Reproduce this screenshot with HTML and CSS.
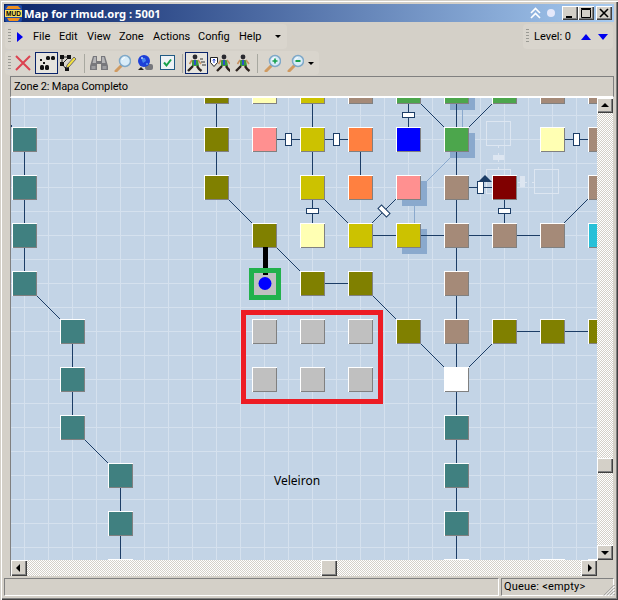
FILE: index.html
```html
<!DOCTYPE html>
<html lang="en">
<head>
<meta charset="utf-8">
<title>Map for rlmud.org : 5001</title>
<link rel="stylesheet" href="styles.css">
</head>
<body>
<svg class="defs" width="0" height="0" aria-hidden="true">
  <defs>
    <g id="room">
      <rect width="25" height="25"/>
      <path class="room-lit" d="M0 .5H24.5M.5 0V24.5"/>
      <path class="room-dark" d="M1 24.5H25M24.5 1V25"/>
    </g>
    <g id="walker">
      <circle cx="8" cy="3" r="2.400" fill="#2a2a30"/>
      <path d="M5 6h6l1 6H5z" fill="#3c9a3c"/>
      <path d="M7 6h2v5H7z" fill="#2a50c8"/>
      <path d="M5 6 2.500 10M11 6l3 4" stroke="#c89060" stroke-width="1.600" fill="none"/>
      <path d="M6 12 3 15 1 17M10 12l2 3 2.500 2" stroke="#2e2420" stroke-width="2.400" fill="none"/>
    </g>
    <g id="lens">
      <path d="M3 17 8 12" stroke="#d09a60" stroke-width="3" stroke-linecap="round"/>
      <circle cx="12" cy="7" r="5.500" fill="#d8ecf8" stroke="#7fa8c8" stroke-width="1.500"/>
      <path d="M9 6a3.500 3.500 0 0 1 3-2.500" stroke="#fff" fill="none"/>
    </g>
  </defs>
</svg>

<div class="window">
  <header class="titlebar">
    <svg class="logo" viewBox="0 0 17 17" width="17" height="17">
      <rect width="17" height="17" rx="2" fill="#1c4aa8"/>
      <path d="M3 1h10l3 3H1z" fill="#f09020"/>
      <rect y="5" width="17" height="7" fill="#f4e060"/>
      <path d="M2 13h13l-2 3H4z" fill="#f09020"/>
      <text class="logo-text" x="8.500" y="11">MUD</text>
    </svg>
    <span class="title-text">Map for rlmud.org : 5001</span>
    <svg class="title-extra" viewBox="0 0 27 12" width="27" height="12">
      <path d="M1 6 5.500 1.500 10 6M1 11l4.500-4.500L10 11" stroke="#fff" stroke-width="1.600" fill="none"/>
      <circle cx="21" cy="6" r="4" fill="#e4e8fa"/>
    </svg>
    <div class="win-buttons">
      <button class="win-btn"><svg viewBox="0 0 16 14" width="16" height="14"><rect x="4" y="10" width="6" height="2"/></svg></button>
      <button class="win-btn"><svg viewBox="0 0 16 14" width="16" height="14"><path class="glyph-line" d="M3.500 3.500H12.500V11.500H3.500ZM3 2.500H13"/></svg></button>
      <button class="win-btn win-close"><svg viewBox="0 0 16 14" width="16" height="14"><path class="glyph-x" d="M4 3 12 11M12 3 4 11"/></svg></button>
    </div>
  </header>

  <div class="bar-row bar-row-menu">
    <nav class="band band-menu">
      <i class="grip"></i>
      <i class="menu-arrow"></i>
      <span class="menu-item m-file">File</span>
      <span class="menu-item m-edit">Edit</span>
      <span class="menu-item m-view">View</span>
      <span class="menu-item m-zone">Zone</span>
      <span class="menu-item m-actions">Actions</span>
      <span class="menu-item m-config">Config</span>
      <span class="menu-item m-help">Help</span>
      <i class="drop-arrow"></i>
    </nav>
    <div class="band band-level">
      <i class="grip"></i>
      <span class="level-text">Level: 0</span>
      <i class="level-up"></i>
      <i class="level-down"></i>
    </div>
  </div>

  <div class="bar-row bar-row-tools">
    <div class="band band-tools">
      <i class="grip"></i>
      <span class="tool"><svg viewBox="0 0 18 18" width="18" height="18"><path d="M2 2 16 16M16 2 2 16" stroke="#dc4250" stroke-width="2" fill="none"/></svg></span>
      <span class="tool tool-on tool-rooms"><svg viewBox="0 0 18 18" width="18" height="18"><g fill="#111"><rect x="8" y="2" width="4" height="4" rx="1.500"/><rect x="13" y="2" width="4" height="4" rx="1.500"/><rect x="2" y="5" width="2" height="2"/><rect x="2" y="11" width="4" height="5" rx="1.500"/><rect x="7" y="11" width="4" height="5" rx="1.500"/><rect x="5" y="8" width="2" height="2"/></g></svg></span>
      <span class="tool tool-edit"><svg viewBox="0 0 18 18" width="18" height="18"><path d="M3 3h7M3 3v7l5 6M3 10 10 3" stroke="#222" fill="none"/><g fill="#111"><rect x="1" y="1" width="4" height="4"/><rect x="8" y="1" width="4" height="4"/><rect x="1" y="8" width="4" height="4"/><rect x="6" y="13" width="4" height="4"/></g><path d="M8 11 15 3l2 2-7 8-3 1z" fill="#f2e040" stroke="#3a3a60" stroke-width=".7"/></svg></span>
      <i class="tool-sep tool-sep-first"></i>
      <span class="tool"><svg viewBox="0 0 18 18" width="18" height="18"><path d="M3 2h4v5h4V2h4l3 10v4h-7V10H7v6H0v-4z" fill="#77777c"/><path d="M4 3h2v6H2.500zM12 3h2l1.500 6H12z" fill="#b4b4b6"/><rect x="1.500" y="12" width="4" height="3" fill="#9c9ca0"/><rect x="12.500" y="12" width="4" height="3" fill="#9c9ca0"/></svg></span>
      <span class="tool"><svg viewBox="0 0 18 18" width="18" height="18"><use href="#lens"/></svg></span>
      <span class="tool"><svg viewBox="0 0 18 18" width="18" height="18"><rect x="9" y="10" width="8" height="6" rx="2" fill="#77777c"/><path d="M2 16h6l-3-3z" fill="#222"/><circle cx="8" cy="7" r="6" fill="#1c3fd8"/><path d="M5 4h4l1 3-3 2zM10 9h2v2h-2z" fill="#4a86ec"/><circle cx="6" cy="4" r="1" fill="#b8d0fa"/></svg></span>
      <span class="tool"><svg viewBox="0 0 16 16" width="16" height="16"><rect x=".5" y=".5" width="14" height="14" fill="#eef2f6" stroke="#1f5a84"/><path d="M4 7.500 6.500 10.500 11 4.500" stroke="#16a04a" stroke-width="2" fill="none"/></svg></span>
      <i class="tool-sep"></i>
      <span class="tool tool-on"><svg viewBox="0 0 20 18" width="20" height="18"><use href="#walker"/><path d="M13 5h3M14 8h4M15 11h4" stroke="#333"/></svg></span>
      <span class="tool"><svg viewBox="0 0 20 18" width="20" height="18"><use href="#walker" x="6"/><path d="M.5 3.500h7v5l-3.500 4-3.500-4z" fill="#fff" stroke="#222"/><path d="M4 5v4M2.800 6.500 4 5l1.200 1.500" stroke="#1c3fd8" fill="none"/></svg></span>
      <span class="tool"><svg viewBox="0 0 16 18" width="16" height="18"><use href="#walker"/></svg></span>
      <i class="tool-sep"></i>
      <span class="tool"><svg viewBox="0 0 18 18" width="18" height="18"><use href="#lens"/><path d="M9.500 7h5M12 4.500v5" stroke="#16a04a" stroke-width="1.600"/></svg></span>
      <span class="tool"><svg viewBox="0 0 18 18" width="18" height="18"><use href="#lens"/><path d="M9.500 7h5" stroke="#16a04a" stroke-width="2"/></svg></span>
      <i class="drop-arrow drop-tools"></i>
    </div>
  </div>

  <div class="zone-label">Zone 2: Mapa Completo</div>

  <section class="map-frame">
    <div class="map">
      <svg class="map-svg" viewBox="11 98 586 462" width="586" height="462">
        <g class="shadow">
          <rect x="450" y="85" width="25" height="25"/>
          <rect x="450" y="133" width="25" height="25"/>
          <rect x="402" y="181" width="25" height="25"/>
          <rect x="402" y="229" width="25" height="25"/>
        </g>
        <path class="shadow-link" d="M462.500 110V127M414.500 206V223M450 158 427 181"/>
        <g class="ghost">
          <rect x="486.500" y="121.500" width="24" height="24"/>
          <rect x="486.500" y="169.500" width="24" height="24"/>
          <rect x="534.500" y="169.500" width="24" height="24"/>
        </g>
        <path class="ghost-dash" d="M498.500 146V169M511 182.500H534"/>
        <rect class="ghost-door" x="493" y="155" width="11" height="5"/>
        <rect class="ghost-door" x="520" y="176" width="5" height="11"/>

        <path class="link" d="M216.500 98V187M312.500 98V235M360.500 139V187M408.500 98V139M456.500 98V560M504.500 187V235M24.500 139V283M72.500 331V427M120.500 475V560M264 139.500H360M552 139.500H597M456 187.500H504M360 235.500H552M312 283.500H360M504 331.500H597"/>
        <path class="diag" d="M11 125 12 127M229 200 252 223M277 248 300 271M324 199 348 223M372 223 397 198M373 296 396 319M421 344 444 367M469 367 492 344M421 104 444 127M469 127 492 104M564 223 588 199M37 296 60 319M85 440 108 463"/>

        <use href="#room" class="olive" x="204" y="79"/>
        <use href="#room" class="pale" x="252" y="79"/>
        <use href="#room" class="yellow" x="300" y="79"/>
        <use href="#room" class="tan" x="348" y="79"/>
        <use href="#room" class="green" x="396" y="79"/>
        <use href="#room" class="green" x="444" y="79"/>
        <use href="#room" class="green" x="492" y="79"/>
        <use href="#room" class="tan" x="540" y="79"/>
        <use href="#room" class="tan" x="588" y="79"/>

        <use href="#room" class="teal" x="12" y="127"/>
        <use href="#room" class="olive" x="204" y="127"/>
        <use href="#room" class="pink" x="252" y="127"/>
        <use href="#room" class="yellow" x="300" y="127"/>
        <use href="#room" class="orange" x="348" y="127"/>
        <use href="#room" class="blue" x="396" y="127"/>
        <use href="#room" class="green" x="444" y="127"/>
        <use href="#room" class="pale" x="540" y="127"/>
        <use href="#room" class="tan" x="588" y="127"/>

        <use href="#room" class="teal" x="12" y="175"/>
        <use href="#room" class="olive" x="204" y="175"/>
        <use href="#room" class="yellow" x="300" y="175"/>
        <use href="#room" class="orange" x="348" y="175"/>
        <use href="#room" class="pink" x="396" y="175"/>
        <use href="#room" class="tan" x="444" y="175"/>
        <use href="#room" class="maroon" x="492" y="175"/>
        <use href="#room" class="tan" x="588" y="175"/>

        <use href="#room" class="teal" x="12" y="223"/>
        <use href="#room" class="olive" x="252" y="223"/>
        <use href="#room" class="pale" x="300" y="223"/>
        <use href="#room" class="yellow" x="348" y="223"/>
        <use href="#room" class="yellow" x="396" y="223"/>
        <use href="#room" class="tan" x="444" y="223"/>
        <use href="#room" class="tan" x="492" y="223"/>
        <use href="#room" class="tan" x="540" y="223"/>
        <use href="#room" class="cyan" x="588" y="223"/>

        <use href="#room" class="teal" x="12" y="271"/>
        <use href="#room" class="olive" x="300" y="271"/>
        <use href="#room" class="olive" x="348" y="271"/>
        <use href="#room" class="tan" x="444" y="271"/>

        <use href="#room" class="teal" x="60" y="319"/>
        <use href="#room" class="gray" x="252" y="319"/>
        <use href="#room" class="gray" x="300" y="319"/>
        <use href="#room" class="gray" x="348" y="319"/>
        <use href="#room" class="olive" x="396" y="319"/>
        <use href="#room" class="tan" x="444" y="319"/>
        <use href="#room" class="olive" x="492" y="319"/>
        <use href="#room" class="olive" x="540" y="319"/>
        <use href="#room" class="olive" x="588" y="319"/>

        <use href="#room" class="teal" x="60" y="367"/>
        <use href="#room" class="gray" x="252" y="367"/>
        <use href="#room" class="gray" x="300" y="367"/>
        <use href="#room" class="gray" x="348" y="367"/>
        <use href="#room" class="white" x="444" y="367"/>

        <use href="#room" class="teal" x="60" y="415"/>
        <use href="#room" class="teal" x="444" y="415"/>
        <use href="#room" class="teal" x="108" y="463"/>
        <use href="#room" class="teal" x="444" y="463"/>
        <use href="#room" class="teal" x="108" y="511"/>
        <use href="#room" class="teal" x="444" y="511"/>
        <use href="#room" class="teal" x="108" y="559"/>
        <use href="#room" class="teal" x="444" y="559"/>
        <use href="#room" class="tan" x="540" y="559"/>
        <use href="#room" class="tan" x="588" y="559"/>

        <g class="door">
          <rect x="285.500" y="133.500" width="6" height="12"/>
          <rect x="333.500" y="133.500" width="6" height="12"/>
          <rect x="573.500" y="133.500" width="6" height="12"/>
          <rect x="402.500" y="112.500" width="12" height="5"/>
          <rect x="306.500" y="208.500" width="12" height="5"/>
          <rect x="498.500" y="208.500" width="12" height="5"/>
          <rect x="477.500" y="181.500" width="6" height="12"/>
          <rect class="door-aa" x="378" y="208.500" width="12" height="5" transform="rotate(45 384 211)"/>
        </g>
        <path class="door-arrow" d="M485 175 492 182H478Z"/>

        <rect class="player" x="251.500" y="270.500" width="27" height="27"/>
        <rect class="thick" x="263" y="247" width="5" height="21"/>
        <rect class="thick" x="263" y="273" width="5" height="2"/>
        <circle class="dot" cx="265" cy="283.500" r="6.500"/>
        <rect class="selection" x="243.500" y="312.500" width="137" height="89"/>
        <text class="map-label" x="274" y="485">Veleiron</text>
      </svg>
    </div>
    <div class="vscroll">
      <i class="sb-btn sb-up"></i>
      <i class="sb-track"><i class="sb-thumb sb-thumb-v"></i></i>
      <i class="sb-btn sb-down"></i>
    </div>
    <div class="hscroll">
      <i class="sb-btn sb-left"></i>
      <i class="sb-track"><i class="sb-thumb sb-thumb-h"></i></i>
      <i class="sb-btn sb-right"></i>
    </div>
    <div class="corner"></div>
  </section>

  <footer class="status">
    <div class="status-cell status-main"></div>
    <div class="status-cell status-queue">Queue: &lt;empty&gt;<svg class="size-grip" viewBox="0 0 12 12" width="12" height="12"><path d="M11.500 1 1 11.500M11.500 4 4 11.500M11.500 7 7 11.500M11.500 10 10 11.500" stroke="#808080"/><path d="M11.500 2 2 11.500M11.500 5 5 11.500M11.500 8 8 11.500" stroke="#fff"/></svg></div>
  </footer>
</div>
</body>
</html>
```
FILE: styles.css
```css
* { box-sizing: border-box; }
html, body { margin: 0; padding: 0; }
body { width: 618px; height: 600px; overflow: hidden; background: #d4d0c8; font-family: Roboto, "Noto Sans", sans-serif; font-size: 11px; color: #000; }
i { display: block; font-style: normal; }
.defs { position: absolute; }

.window { width: 618px; height: 600px; padding: 4px; display: flex; flex-direction: column; background: #d4d0c8; box-shadow: inset 1px 1px 0 #d4d0c8, inset 2px 2px 0 #fff, inset -1px -1px 0 #404040, inset -2px -2px 0 #808080; }

.titlebar { height: 18px; flex: none; display: flex; align-items: center; background: linear-gradient(90deg, #0a246a, #a6caf0); color: #fff; }
.logo { flex: none; margin: 0 2px 0 1px; }
.logo-text { font: bold 6.500px "Liberation Sans", sans-serif; fill: #000; text-anchor: middle; }
.title-text { flex: 1; font-family: "Noto Sans", sans-serif; font-weight: 700; font-size: 11.200px; white-space: nowrap; }
.title-extra { flex: none; margin-right: 5px; }
.win-buttons { display: flex; flex: none; margin-right: 2px; }
.win-btn { width: 16px; height: 14px; padding: 0; border: 0; display: block; background: #d4d0c8; box-shadow: inset 1px 1px 0 #fff, inset -1px -1px 0 #404040, inset -2px -2px 0 #808080; }
.win-btn svg { display: block; }
.win-close { margin-left: 2px; }
.glyph-line { fill: none; stroke: #000; }
.glyph-x { fill: none; stroke: #000; stroke-width: 1.600; }

.bar-row { display: flex; justify-content: space-between; flex: none; }
.bar-row-menu { height: 25px; margin-top: 2px; }
.bar-row-tools { height: 24px; margin-top: 2px; }
.band { display: flex; align-items: center; background: #d9d5cd; border-radius: 4px; margin-left: 1px; }
.band-menu { width: 282px; }
.band-level { width: 90px; margin-right: 1px; }
.band-tools { width: 314px; }
.grip { width: 3px; height: 15px; margin-left: 3px; flex: none; background: repeating-linear-gradient(180deg, #9a9a94 0 1px, transparent 1px 3px); }
.menu-arrow { width: 0; height: 0; margin-left: 6px; flex: none; border-left: 6px solid #0000ee; border-top: 5px solid transparent; border-bottom: 5px solid transparent; }
.menu-item { white-space: nowrap; flex: none; }
.m-file { margin-left: 10px; width: 26px; }
.m-edit { width: 28px; }
.m-view { width: 32px; }
.m-zone { width: 34px; }
.m-actions { width: 45px; }
.m-config { width: 41px; }
.m-help { width: 36px; }
.drop-arrow { width: 0; height: 0; flex: none; border-top: 3px solid #000; border-left: 3px solid transparent; border-right: 3px solid transparent; }
.level-text { margin-left: 5px; width: 47px; white-space: nowrap; flex: none; }
.level-up { width: 0; height: 0; flex: none; border-bottom: 6px solid #0000ee; border-left: 5px solid transparent; border-right: 5px solid transparent; }
.level-down { width: 0; height: 0; margin-left: 7px; flex: none; border-top: 6px solid #0000ee; border-left: 5px solid transparent; border-right: 5px solid transparent; }

.tool { width: 23px; height: 22px; flex: none; display: flex; align-items: center; justify-content: center; }
.tool-rooms { margin-left: 1px; }
.tool-edit { width: 20px; }
.tool-on { border: 1px solid #0a246a; background: #e6e4de; }
.tool-sep { width: 1px; height: 19px; flex: none; margin: 0 2px 0 3px; background: #a8a8a0; }
.tool-sep-first { margin-left: 6px; }
.drop-tools { margin-left: 2px; }

.zone-label { height: 22px; flex: none; margin: 1px 0 0 6px; padding: 1px 0 0 3px; line-height: 17px; letter-spacing: -.15px; white-space: nowrap; border-top: 1px solid #808080; border-left: 1px solid #808080; border-right: 1px solid #808080; border-bottom: 2px solid #fff; }

.map-frame { display: grid; grid-template-columns: 586px 16px; grid-template-rows: 462px 16px; flex: none; margin-left: 6px; width: 604px; border-left: 1px solid #808080; box-sizing: border-box; }
.map { overflow: hidden; background-color: #c3d4e6; background-image: linear-gradient(90deg, #d5e1ee 1px, transparent 1px), linear-gradient(180deg, #d5e1ee 1px, transparent 1px); background-size: 24px 24px; background-position: 13px 17px; }
.map-svg { display: block; }
.room-lit { stroke: #fff; fill: none; shape-rendering: crispEdges; }
.room-dark { stroke: #808080; fill: none; shape-rendering: crispEdges; }
.olive { fill: #808000; }
.pale { fill: #ffffb3; }
.yellow { fill: #ccc200; }
.tan { fill: #a58a78; }
.green { fill: #4ca64c; }
.teal { fill: #408080; }
.pink { fill: #ff9090; }
.orange { fill: #ff8040; }
.blue { fill: #0000ff; }
.maroon { fill: #800000; }
.cyan { fill: #28c0d8; }
.gray { fill: #c0c0c0; }
.white { fill: #ffffff; }
.shadow { fill: #8aa9cd; }
.shadow-link { stroke: #8aa9cd; fill: none; shape-rendering: crispEdges; }
.ghost { fill: none; stroke: #dde6f1; shape-rendering: crispEdges; }
.ghost-dash { fill: none; stroke: #dde6f1; stroke-dasharray: 2 5; shape-rendering: crispEdges; }
.ghost-door { fill: #dde6f1; }
.link { stroke: #1c3d66; fill: none; shape-rendering: crispEdges; }
.diag { stroke: #1c3d66; fill: none; shape-rendering: crispEdges; }
.door rect { fill: #fff; stroke: #1c3d66; shape-rendering: crispEdges; }
.door .door-aa { shape-rendering: auto; }
.door-arrow { fill: #1c3d66; }
.player { fill: #c0c0c0; stroke: #22b14c; stroke-width: 5; shape-rendering: crispEdges; }
.thick { fill: #000; }
.dot { fill: #0000ff; }
.selection { fill: none; stroke: #ed1c24; stroke-width: 5; shape-rendering: crispEdges; }
.map-label { font-size: 12px; font-family: "Noto Sans", sans-serif; fill: #000; }

.vscroll { display: flex; flex-direction: column; }
.hscroll { display: flex; }
.corner { background: #d4d0c8; }
.sb-track { flex: 1; position: relative; background-color: #fff; background-image: conic-gradient(#d4d0c8 25%, #fff 0 50%, #d4d0c8 0 75%, #fff 0); background-size: 2px 2px; }
.sb-btn { flex: none; width: 16px; height: 16px; position: relative; background: #d4d0c8; box-shadow: inset 1px 1px 0 #fff, inset -1px -1px 0 #404040, inset -2px -2px 0 #808080; }
.sb-up, .sb-down { height: 15px; }
.sb-btn::after { content: ""; position: absolute; left: 50%; top: 50%; width: 0; height: 0; }
.sb-up::after { margin: -3px 0 0 -4px; border-bottom: 4px solid #000; border-left: 4px solid transparent; border-right: 4px solid transparent; }
.sb-down::after { margin: -2px 0 0 -4px; border-top: 4px solid #000; border-left: 4px solid transparent; border-right: 4px solid transparent; }
.sb-left::after { margin: -4px 0 0 -3px; border-right: 4px solid #000; border-top: 4px solid transparent; border-bottom: 4px solid transparent; }
.sb-right::after { margin: -4px 0 0 -1px; border-left: 4px solid #000; border-top: 4px solid transparent; border-bottom: 4px solid transparent; }
.sb-thumb { position: absolute; background: #d4d0c8; box-shadow: inset 1px 1px 0 #fff, inset -1px -1px 0 #404040, inset -2px -2px 0 #808080; }
.sb-thumb-v { left: 0; width: 16px; height: 15px; top: 345px; }
.sb-thumb-h { top: 0; height: 16px; width: 16px; left: 294px; }

.status { display: flex; flex: none; height: 18px; margin-top: 2px; gap: 2px; }
.status-cell { border-top: 1px solid #808080; border-left: 1px solid #808080; border-right: 1px solid #fff; border-bottom: 1px solid #fff; }
.status-main { width: 495px; flex: none; }
.status-queue { flex: 1; position: relative; padding-left: 2px; line-height: 16px; letter-spacing: .2px; white-space: nowrap; }
.size-grip { position: absolute; right: -2px; bottom: -1px; }
```
